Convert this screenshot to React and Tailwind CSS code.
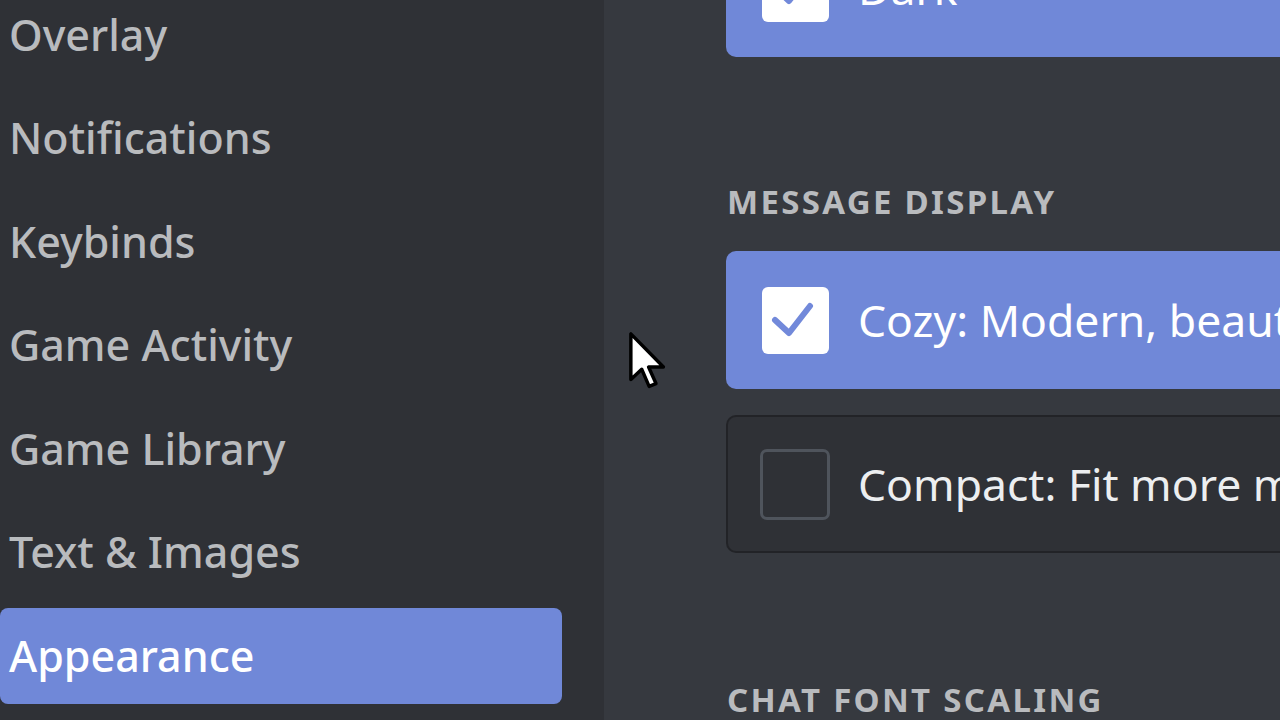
const navItems = [
  "Overlay",
  "Notifications",
  "Keybinds",
  "Game Activity",
  "Game Library",
  "Text & Images",
  "Appearance",
];

function CheckBox({ checked }) {
  if (checked) {
    return (
      <div className="w-[67px] h-[67px] rounded-[6px] bg-white flex items-center justify-center shrink-0">
        <svg width="67" height="67" viewBox="0 0 67 67">
          <path
            d="M13 33 L27 46 L48 19"
            fill="none"
            stroke="#7289da"
            strokeWidth="6"
            strokeLinecap="round"
            strokeLinejoin="round"
          />
        </svg>
      </div>
    );
  }
  return (
    <div className="w-[70px] h-[71px] rounded-[7px] border-[3px] border-[#4f545c] shrink-0" />
  );
}

function OptionCard({ checked, label, className }) {
  return (
    <div
      className={
        "w-[640px] rounded-l-[10px] flex items-center shrink-0 " +
        (checked
          ? "h-[138px] bg-[#7088d8] text-white pl-[36px] gap-[29px]"
          : "h-[138px] bg-[#2f3136] border-[2px] border-r-0 border-[#222327] text-[#eceef0] pl-[32px] gap-[28px]") +
        " " +
        (className || "")
      }
    >
      <CheckBox checked={checked} />
      <span className="text-[44.5px] whitespace-nowrap leading-none">{label}</span>
    </div>
  );
}

export default function App() {
  return (
    <div
      className="relative w-[1280px] h-[720px] overflow-hidden flex bg-[#36393f]"
      style={{ fontFamily: '"Noto Sans", "Open Sans", sans-serif' }}
    >
      {/* SIDEBAR */}
      <div className="w-[604px] h-full bg-[#2f3136] shrink-0">
        <div className="flex flex-col gap-[7.5px] -mt-[13px] w-[562px]">
          {navItems.map((item) => (
            <div
              key={item}
              className={
                "h-[96px] flex items-center pl-[9px] rounded-[8px] text-[43px] font-medium whitespace-nowrap " +
                (item === "Appearance"
                  ? "bg-[#7088d8] text-white"
                  : "text-[#b9bbbe]")
              }
            >
              {item}
            </div>
          ))}
        </div>
      </div>

      {/* CONTENT */}
      <div className="flex-1 pl-[122px] overflow-hidden">
        <div className="flex flex-col">
          <OptionCard checked label="Dark" className="-mt-[81px]" />

          <h2 className="mt-[128px] text-[33px] font-bold uppercase tracking-[0.07em] text-[#b9bbbe] leading-none pl-[1px] whitespace-nowrap">
            Message Display
          </h2>

          <OptionCard
            checked
            label="Cozy: Modern, beautiful, and easy on your eyes."
            className="mt-[33px]"
          />
          <OptionCard
            label="Compact: Fit more messages on screen at one time."
            className="mt-[26px]"
          />

          <h2 className="mt-[130px] text-[33px] font-bold uppercase tracking-[0.07em] text-[#b9bbbe] leading-none pl-[1px] whitespace-nowrap">
            Chat Font Scaling
          </h2>
        </div>
      </div>

      {/* CURSOR */}
      <svg
        className="absolute left-[628px] top-[331px]"
        width="40"
        height="60"
        viewBox="0 0 14 21"
      >
        <path
          d="M1 1 L1 17 L4.8 13.4 L7.4 19.4 L9.8 18.4 L7.2 12.6 L12.4 12.6 Z"
          fill="white"
          stroke="black"
          strokeWidth="1.2"
          strokeLinejoin="round"
        />
      </svg>
    </div>
  );
}
